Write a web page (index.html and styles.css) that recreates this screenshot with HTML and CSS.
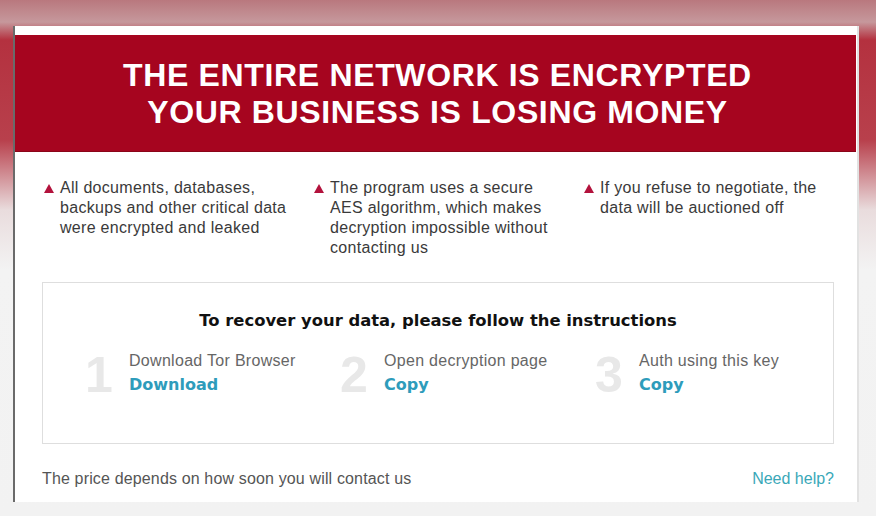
FILE: index.html
```html
<!DOCTYPE html>
<html lang="en">
<head>
<meta charset="utf-8">
<title>Network encrypted</title>
<link rel="stylesheet" href="styles.css">
</head>
<body>
<div class="card">
  <header class="banner">
    <h1>THE ENTIRE NETWORK IS ENCRYPTED<br>YOUR BUSINESS IS LOSING MONEY</h1>
  </header>
  <section class="facts">
    <div class="fact"><span class="tri"></span><p>All documents, databases, backups and other critical data were encrypted and leaked</p></div>
    <div class="fact"><span class="tri"></span><p>The program uses a secure AES algorithm, which makes decryption impossible without contacting us</p></div>
    <div class="fact"><span class="tri"></span><p>If you refuse to negotiate, the data will be auctioned off</p></div>
  </section>
  <section class="steps-box">
    <h2>To recover your data, please follow the instructions</h2>
    <div class="steps">
      <div class="step"><span class="num">1</span><div class="step-body"><span class="label">Download Tor Browser</span><a class="link">Download</a></div></div>
      <div class="step"><span class="num">2</span><div class="step-body"><span class="label">Open decryption page</span><a class="link">Copy</a></div></div>
      <div class="step"><span class="num">3</span><div class="step-body"><span class="label">Auth using this key</span><a class="link">Copy</a></div></div>
    </div>
  </section>
  <footer class="foot">
    <span>The price depends on how soon you will contact us</span>
    <a class="help">Need help?</a>
  </footer>
</div>
</body>
</html>
```
FILE: styles.css
```css
html, body { margin: 0; height: 100%; }
body {
  width: 876px;
  height: 516px;
  overflow: hidden;
  padding: 26px 0 0 13px;
  box-sizing: border-box;
  font-family: "Liberation Sans", Arial, sans-serif;
  background:
    linear-gradient(to bottom, #b9787e 0, #c6989c 22px, #b4313f 40px, #b8404c 140px, #e9dcdd 210px, #f3f3f3 270px, #f2f2f2 100%);
}
.card {
  width: 846px;
  height: 476px;
  box-sizing: border-box;
  background: #fff;
  border-left: 2px solid #6a6a6a;
  border-right: 2px solid #e2e2e2;
  padding-top: 9px;
  display: flex;
  flex-direction: column;
}
.banner {
  background: #a6051f;
  height: 117px;
  margin-right: 1px;
  padding-left: 4px;
  display: flex;
  align-items: center;
  justify-content: center;
  box-shadow: inset 0 -1px 0 #8a0418;
}
.banner h1 {
  margin: 0;
  color: #fff;
  font-size: 32px;
  line-height: 37px;
  font-weight: bold;
  text-align: center;
  letter-spacing: 0.65px;
}
.facts {
  display: grid;
  grid-template-columns: repeat(3, 270px);
  padding: 26px 0 0 29px;
  height: 104px;
}
.fact {
  display: flex;
  align-items: flex-start;
  gap: 6px;
}
.tri {
  flex: none;
  width: 0;
  height: 0;
  margin-top: 6px;
  border-left: 5px solid transparent;
  border-right: 5px solid transparent;
  border-bottom: 9px solid #b3123c;
}
.fact p {
  margin: 0;
  width: 232px;
  font-size: 16px;
  letter-spacing: 0.3px;
  line-height: 20px;
  color: #3a3a3a;
}
.steps-box {
  margin: 0 23px 0 27px;
  height: 162px;
  box-sizing: border-box;
  border: 1px solid #dedede;
  padding-top: 27px;
}
.steps-box h2 {
  margin: 0;
  text-align: center;
  font-family: "DejaVu Sans", Verdana, sans-serif;
  font-size: 16.4px;
  line-height: 22px;
  font-weight: bold;
  color: #111;
}
.steps {
  display: grid;
  grid-template-columns: repeat(3, 255px);
  padding: 15px 0 0 42px;
}
.step {
  display: flex;
  align-items: flex-start;
}
.num {
  width: 44px;
  flex: none;
  font-size: 50px;
  line-height: 56px;
  font-weight: bold;
  color: #e8e8e8;
}
.step-body {
  display: flex;
  flex-direction: column;
  padding-top: 4px;
}
.label {
  font-size: 16px;
  letter-spacing: 0.3px;
  line-height: 20px;
  color: #666;
}
.link {
  font-family: "DejaVu Sans", Verdana, sans-serif;
  font-weight: bold;
  font-size: 16px;
  line-height: 28px;
  color: #2e9cbb;
}
.foot {
  display: flex;
  justify-content: space-between;
  padding: 25px 23px 0 27px;
  font-size: 16px;
  letter-spacing: 0.15px;
  line-height: 20px;
  color: #555;
}
.help { color: #3aa8b8; letter-spacing: 0; }
```
